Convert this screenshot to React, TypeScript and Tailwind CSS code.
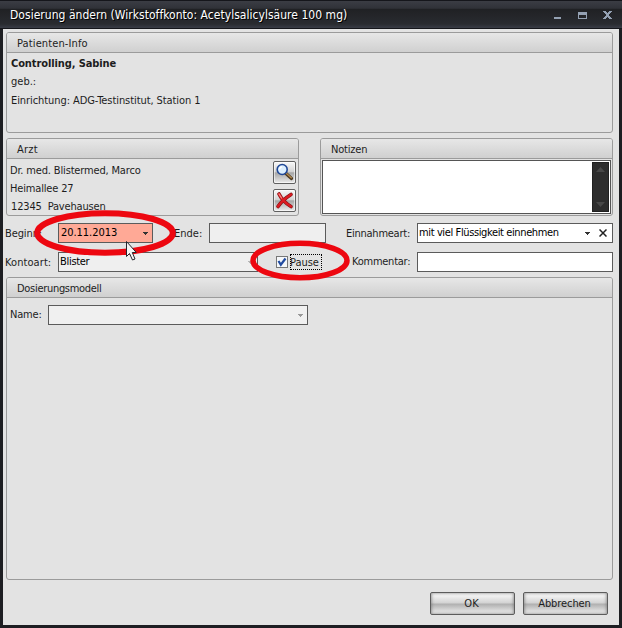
import { useState } from "react";
import type { ReactNode } from "react";

interface GroupProps {
  title: string;
  titleClass?: string;
  className?: string;
  children?: ReactNode;
}

function Group({ title, titleClass = "", className = "", children }: GroupProps) {
  return (
    <section className={`flex flex-col rounded-[3px] border border-[#9b9b9b] ${className}`}>
      <h2 className="h-5 shrink-0 rounded-t-[2px] border-b border-[#9b9b9b] bg-linear-to-b from-[#e7e7e7] to-[#d0d0d0] pl-2.5 leading-[21px]">
        <span className={titleClass}>{title}</span>
      </h2>
      {children}
    </section>
  );
}

function Arrow({ className = "" }: { className?: string }) {
  return (
    <svg width="5" height="3" viewBox="0 0 5 3" shapeRendering="crispEdges" className={className}>
      <path d="M0 0h5v1H4v1H3v1H2V2H1V1H0z" fill="currentColor" />
    </svg>
  );
}

function SearchIcon() {
  return (
    <svg width="19" height="19" viewBox="0 0 19 19">
      <path d="M11 10.5l5.5 5" stroke="#4b3820" strokeWidth="3.2" strokeLinecap="round" />
      <path d="M11.5 10.5l4.8 4.2" stroke="#b48a4d" strokeWidth="1.4" strokeLinecap="round" />
      <circle cx="7.2" cy="6.5" r="5" fill="#dcefff" stroke="#1f4796" strokeWidth="1.6" />
      <path d="M4.5 6.2q.5-2 2.5-2.4" stroke="#fff" strokeWidth="1.5" fill="none" />
    </svg>
  );
}

function DeleteIcon() {
  return (
    <svg width="19" height="19" viewBox="0 0 19 19" fill="none" strokeLinecap="round">
      <path d="M4 3c2 4 6 9 12 12.5M16 3.5C10.500 7 6 11 3 15.500" stroke="#801014" strokeWidth="3.6" />
      <path d="M4 3c2 4 6 9 12 12.5M16 3.500C10.500 7 6 11 3 15.500" stroke="#dc1c22" strokeWidth="2.4" />
      <path d="M4 3l2.500 4" stroke="#ff8b86" strokeWidth="1.200" />
    </svg>
  );
}

const iconButton =
  "flex size-[23px] items-center justify-center rounded-[2px] border border-[#606060] bg-[linear-gradient(to_bottom,#f8f8f8_0%,#d4d4d4_45%,#a6a6a6_52%,#ececec_100%)] shadow-[inset_0_0_0_1px_#ffffff90]";
const pushButton =
  "h-[23px] w-[85px] rounded-[2px] border border-[#5c5c5c] bg-[linear-gradient(to_bottom,#fdfdfd_0%,#d3d3d3_47%,#b0b0b0_53%,#f2f2f2_100%)] pr-0.5 shadow-[inset_1px_0_3px_#77777790,inset_-1px_0_3px_#77777790] leading-[21px]";
const field = "h-5 border border-[#5b5b5b]";

export default function App() {
  const [pause, setPause] = useState(true);
  const [comment, setComment] = useState("");

  return (
    <div className="relative flex h-[628px] w-[622px] flex-col overflow-hidden bg-[#1d1e22] font-['DejaVu_Sans_Condensed','DejaVu_Sans',sans-serif] text-[11px] whitespace-pre text-[#1d1d1d]">
      <header className="flex h-[29px] shrink-0 items-center justify-between border-y border-[#15161b] bg-[linear-gradient(to_bottom,#3b3d44_0%,#303238_27%,#202124_30%,#292b30_85%,#393c46_100%)] pr-[9px] pl-2.5 text-white">
        <h1 className="text-[12px] tracking-[0.03px] [text-shadow:1px_1px_#000]">
          Dosierung ändern (Wirkstoffkonto: Acetylsalicylsäure 100 mg)
        </h1>
        <svg width="60" height="10" viewBox="0 0 60 10" shapeRendering="crispEdges" className="text-[#94a1b3]">
          <path d="M1 7h7v2H1z" fill="currentColor" />
          <path d="M25 2h9v7h-9zM26 5v3h7V5z" fill="currentColor" fillRule="evenodd" />
          <path d="M50 1h3v1h1v1h1V2h1V1h3v1h-1v1h-1v1h-1v2h1v1h1v1h1v1h-3V8h-1V7h-1v1h-1v1h-3V8h1V7h1V6h1V4h-1V3h-1V2h-1z" fill="currentColor" />
        </svg>
      </header>

      <main className="mx-[3px] mb-[3px] flex flex-1 flex-col bg-[#e3e3e3] pt-[3px] pr-[5px] pl-[3px]">
        <Group title="Patienten-Info" titleClass="tracking-[0.12px]" className="h-[101px] w-[607px]">
          <div className="pl-1">
            <p className="h-[21px] font-bold leading-[22px] tracking-[-0.1px]">Controlling, Sabine</p>
            <p className="h-[18px] leading-4">geb.:</p>
            <p className="leading-[18px] tracking-[-0.08px]">Einrichtung: ADG-Testinstitut, Station 1</p>
          </div>
        </Group>

        <div className="mt-[5px] flex w-[607px] justify-between">
          <Group title="Arzt" titleClass="tracking-[0.2px]" className="h-[78px] w-[293px]">
            <div className="flex justify-between pr-0.5 pl-[3px]">
              <div className="pt-[3px] leading-[18px] tracking-[-0.16px]">
                <p>Dr. med. Blistermed, Marco</p>
                <p>Heimallee 27</p>
                <p className="pl-px">12345  Pavehausen</p>
              </div>
              <div className="flex flex-col gap-[5px] pt-0.5">
                <button className={iconButton} aria-label="Arzt suchen"><SearchIcon /></button>
                <button className={iconButton} aria-label="Arzt entfernen"><DeleteIcon /></button>
              </div>
            </div>
          </Group>
          <Group title="Notizen" titleClass="tracking-[-0.2px]" className="h-[78px] w-[293px]">
            <div className="mx-px mt-px flex h-[54px] justify-end border border-[#555] bg-white p-px">
              <div className="flex w-[17px] flex-col items-center justify-between border border-[#202020] bg-[#2d2d2d] py-1 text-[#484848]">
                <svg width="9" height="5" viewBox="0 0 9 5"><path d="M0 5l4.5-5L9 5z" fill="currentColor" /></svg>
                <svg width="9" height="5" viewBox="0 0 9 5"><path d="M0 0l4.5 5L9 0z" fill="currentColor" /></svg>
              </div>
            </div>
          </Group>
        </div>

        <div className="mt-[7px] flex h-5 w-[607px] items-center">
          <label className="-ml-px w-[53px] pt-0.5 tracking-[-0.1px]">Beginn:</label>
          <div className={`${field} flex w-[95px] items-center justify-between bg-[#ffa996] pr-1 pl-0.5 text-black`}>
            <span className="tracking-[-0.05px]">20.11.2013</span>
            <Arrow className="text-[#333]" />
          </div>
          <label className="w-[56px] pt-0.5 pl-[21px]">Ende:</label>
          <div className={`${field} w-[117px] bg-[#efefef]`} />
          <label className="w-[91px] pt-0.5 pl-5 tracking-[-0.25px]">Einnahmeart:</label>
          <div className={`${field} flex w-[196px] items-center bg-white pl-px text-black`}>
            <span className="flex-1 tracking-[-0.38px]">mit viel Flüssigkeit einnehmen</span>
            <Arrow className="mr-[9px] text-[#333]" />
            <svg width="8" height="8" viewBox="0 0 8 8" className="mr-[5px]">
              <path d="M.5.5l7 7m0-7l-7 7" stroke="#222" strokeWidth="1.5" />
            </svg>
          </div>
        </div>

        <div className="mt-[9px] flex h-5 w-[607px] items-center">
          <label className="-ml-px w-[53px] pt-[3px] tracking-[0.08px]">Kontoart:</label>
          <div className={`${field} flex w-[200px] items-center justify-between bg-[#efefef] pr-1 pl-px text-black`}>
            <span className="tracking-[-0.3px]">Blister</span>
            <Arrow className="text-[#b5b5b5]" />
          </div>
          <div className="flex w-[94px] items-center pl-[18px]">
            <button
              role="checkbox"
              aria-checked={pause}
              aria-label="Pause"
              onClick={() => setPause(!pause)}
              className="flex size-3 items-center justify-center border border-[#777] bg-[#f5f7fa]"
            >
              {pause && (
                <svg width="10" height="10" viewBox="0 0 10 10" fill="none">
                  <path d="M1.5 4l2.3 3.7L8.5 1.5" stroke="#214ba0" strokeWidth="2.2" />
                </svg>
              )}
            </button>
            <span className="ml-0.5 h-4 w-8 border border-dotted border-black leading-[15px] tracking-[-0.05px] -indent-px">Pause</span>
          </div>
          <label className="w-[65px] tracking-[-0.25px]">Kommentar:</label>
          <input
            value={comment}
            aria-label="Kommentar"
            onChange={(e) => setComment(e.target.value)}
            className={`${field} w-[196px] bg-white px-1 outline-none`}
          />
        </div>

        <Group title="Dosierungsmodell" titleClass="tracking-[-0.3px]" className="mt-[5px] h-[303px] w-[607px]">
          <div className="mt-[7px] flex items-center pl-[3px]">
            <label className="w-[38px] pt-px tracking-[-0.2px]">Name:</label>
            <div className={`${field} flex w-[260px] items-center justify-end bg-[#f0f0f0] pr-1 text-[#999]`}>
              <Arrow />
            </div>
          </div>
        </Group>

        <footer className="mt-3 flex justify-end gap-2 pr-[6px]">
          <button className={pushButton}>OK</button>
          <button className={`${pushButton} tracking-[-0.08px]`}>Abbrechen</button>
        </footer>
      </main>

      {/* red highlights and mouse pointer */}
      <svg className="pointer-events-none absolute inset-0" width="622" height="628" viewBox="0 0 622 628" fill="none">
        <ellipse cx="105" cy="233" rx="67.800" ry="19.800" stroke="#ed0710" strokeWidth="6" />
        <ellipse cx="300" cy="260.500" rx="47" ry="17.200" stroke="#ed0710" strokeWidth="5.500" />
        <path d="M126.500 241.500v15l3-3 3 6.500 2.500-1-2.700-6.500h4z" fill="#f4f4f4" stroke="#24242c" />
      </svg>
    </div>
  );
}
